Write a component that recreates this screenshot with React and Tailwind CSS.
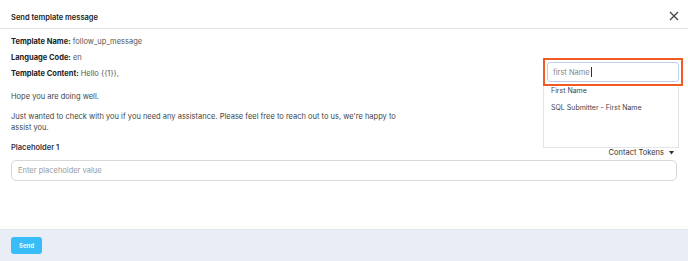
import React from "react";

export default function App() {
  const font = { fontFamily: 'Inter, "Noto Sans", sans-serif' };
  return (
    <div className="w-[688px] h-[261px] bg-white flex flex-col overflow-hidden text-[#333]" style={font}>
      <div className="h-[29px] shrink-0 border-b border-[#e3e3e3] flex items-center justify-between pl-[11px] pr-[9px] pt-[3px]">
        <span className="text-[7.5px] font-semibold text-[#222] translate-y-[2px]">Send template message</span>
        <svg width="10" height="10" viewBox="0 0 10 10" className="text-[#444]">
          <path d="M1 1L9 9M9 1L1 9" stroke="currentColor" strokeWidth="1.3" />
        </svg>
      </div>
      <div className="relative flex-1 px-[11px] pt-[7px] text-[7.5px] leading-[11px]">
        <div className="flex flex-col gap-[5px]">
          <p><span className="font-bold text-[#222]">Template Name:</span> <span className="text-[#555]">follow_up_message</span></p>
          <p><span className="font-bold text-[#222]">Language Code:</span> <span className="text-[#555]">en</span></p>
          <p><span className="font-bold text-[#222]">Template Content:</span> <span className="text-[#555]">Hello {"{{1}}"},</span></p>
        </div>
        <div className="mt-[12px] text-[#444]">
          <p>Hope you are doing well.</p>
          <p className="mt-[9px] w-[395px]">Just wanted to check with you if you need any assistance. Please feel free to reach out to us, we're happy to assist you.</p>
        </div>
        <div className="mt-[9px] flex items-end justify-between">
          <span className="text-[7.5px] font-semibold text-[#334]">Placeholder 1</span>
          <span className="text-[7.5px] text-[#333] pr-[3px] translate-y-[5px] flex items-center gap-[5px]">Contact Tokens
            <svg width="5" height="4" viewBox="0 0 5 4"><path d="M0 0H5L2.5 3.5Z" fill="#333" /></svg>
          </span>
        </div>
        <div className="mt-[7px] h-[21px] border border-[#d8d8d8] rounded-[5px] flex items-center px-[6px] text-[#9a9a9a]">
          Enter placeholder value
        </div>

        <div className="absolute left-[543px] top-[29px] w-[140px]">
          <div className="border-[2px] border-[#f15a22] p-[2px] bg-white">
            <div className="h-[20px] border border-[#bcd3f0] rounded-[3px] flex items-center px-[5px] text-[#888]">
              first Name<span className="w-px h-[10px] bg-[#333] ml-[1px]"></span>
            </div>
          </div>
          <div className="w-[136px] h-[62px] border border-t-0 border-[#e4e4e4] bg-white px-[7px] text-[7px] text-[#444]">
            <p className="leading-[9px]">First Name</p>
            <p className="mt-[8px] leading-[9px]">SQL Submitter - First Name</p>
          </div>
        </div>
      </div>
      <div className="h-[32px] shrink-0 bg-[#e9edf5] border-t border-[#e3e6ec] flex items-center px-[11px]">
        <button className="h-[17px] w-[31px] rounded-[3px] bg-[#38bdf8] text-white text-[6px] font-semibold">Send</button>
      </div>
    </div>
  );
}
